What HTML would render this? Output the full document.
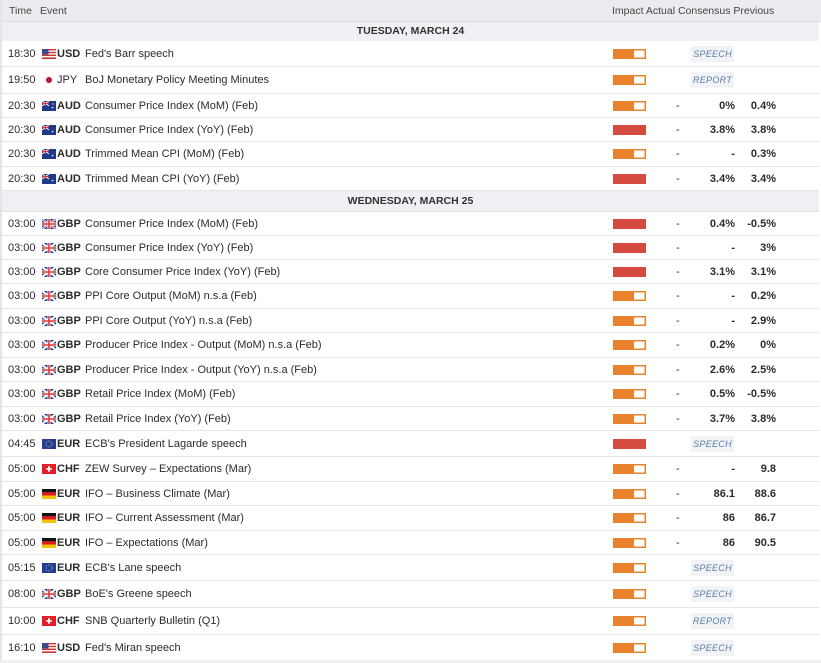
<!DOCTYPE html>
<html><head><meta charset="utf-8"><style>
body{margin:0;width:821px;height:663px;overflow:hidden;background:#fff;font-family:"Liberation Sans",sans-serif;font-size:11px;color:#2b2b2b;position:relative}
.r{position:absolute;left:2px;width:817px;border-bottom:1px solid #e4e5e9;background:#fff}
.r>*{position:absolute;top:50%;transform:translateY(-50%)}
.t{left:6px}
.f{left:40px;width:14px;height:10px}
.c{left:55px;font-weight:bold}
.e{left:83px}
.b{left:611px;width:33px;height:10px}
.b.o{background:linear-gradient(90deg,#e8822e 0 21px,#fff 21px);box-shadow:inset 0 0 0 1.5px #e8822e}
.b.h{background:#d64b3f}
.d{left:674px}
.cs{right:84px;text-align:right;font-weight:bold}
.pv{right:43px;text-align:right;font-weight:bold}
.sp{left:689px;width:43px;height:16px;background:#f1f3f6;color:#5b7fa6;font-style:italic;font-size:9px;line-height:16px;text-align:center;letter-spacing:.3px}
.day{position:absolute;left:2px;width:817px;background:#eef0f4;text-align:center;font-weight:bold;font-size:10.5px;color:#333;border-bottom:1px solid #e0e1e5}
.hd{position:absolute;left:0;top:0;width:821px;height:21px;background:#ebecf0;border-bottom:1px solid #dcdde2;font-size:10.5px;color:#444;line-height:22px}
</style></head><body>
<div class="hd"><span style="position:absolute;left:9px">Time</span><span style="position:absolute;left:40px">Event</span><span style="position:absolute;left:612px">Impact Actual Consensus Previous</span></div>
<div style="position:absolute;left:0;top:0;width:2px;height:663px;background:#e4e5e9"></div>
<div style="position:absolute;left:0;top:660px;width:821px;height:3px;background:#eef0f4"></div>
<div class="day" style="top:22px;height:19px;line-height:19px">TUESDAY, MARCH 24</div>

<div class="r" style="top:41px;height:25px"><span class="t">18:30</span><svg class="f" viewBox="0 0 14 10"><rect width="14" height="10" fill="#fff"/><g fill="#c33"><rect y="0" width="14" height="1.4"/><rect y="2.8" width="14" height="1.4"/><rect y="5.6" width="14" height="1.4"/><rect y="8.4" width="14" height="1.6"/></g><rect width="6.5" height="5.5" fill="#3b4a8c"/></svg><span class="c">USD</span><span class="e">Fed's Barr speech</span><span class="b o"></span><span class="sp">SPEECH</span></div>
<div class="r" style="top:67px;height:26px"><span class="t">19:50</span><svg class="f" viewBox="0 0 14 10"><rect width="14" height="10" fill="#fff"/><circle cx="7" cy="5" r="3" fill="#c2112c"/></svg><span class="c" style="font-weight:normal">JPY</span><span class="e">BoJ Monetary Policy Meeting Minutes</span><span class="b o"></span><span class="sp">REPORT</span></div>

<div class="r" style="top:94px;height:23px"><span class="t">20:30</span><svg class="f" viewBox="0 0 14 10"><rect width="14" height="10" fill="#1f3a8a"/><path d="M0 0L7 5M7 0L0 5" stroke="#fff" stroke-width="1"/><path d="M3.5 0V5M0 2.5H7" stroke="#d33" stroke-width="1"/><circle cx="10.5" cy="6.5" r=".8" fill="#fff"/><circle cx="11" cy="3" r=".6" fill="#fff"/></svg><span class="c">AUD</span><span class="e">Consumer Price Index (MoM) (Feb)</span><span class="b o"></span><span class="d">-</span><span class="cs">0%</span><span class="pv">0.4%</span></div>
<div class="r" style="top:118px;height:23px"><span class="t">20:30</span><svg class="f" viewBox="0 0 14 10"><rect width="14" height="10" fill="#1f3a8a"/><path d="M0 0L7 5M7 0L0 5" stroke="#fff" stroke-width="1"/><path d="M3.5 0V5M0 2.5H7" stroke="#d33" stroke-width="1"/><circle cx="10.5" cy="6.5" r=".8" fill="#fff"/></svg><span class="c">AUD</span><span class="e">Consumer Price Index (YoY) (Feb)</span><span class="b h"></span><span class="d">-</span><span class="cs">3.8%</span><span class="pv">3.8%</span></div>
<div class="r" style="top:142px;height:24px"><span class="t">20:30</span><svg class="f" viewBox="0 0 14 10"><rect width="14" height="10" fill="#1f3a8a"/><path d="M0 0L7 5M7 0L0 5" stroke="#fff" stroke-width="1"/><path d="M3.5 0V5M0 2.5H7" stroke="#d33" stroke-width="1"/><circle cx="10.5" cy="6.5" r=".8" fill="#fff"/></svg><span class="c">AUD</span><span class="e">Trimmed Mean CPI (MoM) (Feb)</span><span class="b o"></span><span class="d">-</span><span class="cs">-</span><span class="pv">0.3%</span></div>
<div class="r" style="top:167px;height:23px"><span class="t">20:30</span><svg class="f" viewBox="0 0 14 10"><rect width="14" height="10" fill="#1f3a8a"/><path d="M0 0L7 5M7 0L0 5" stroke="#fff" stroke-width="1"/><path d="M3.5 0V5M0 2.5H7" stroke="#d33" stroke-width="1"/><circle cx="10.5" cy="6.5" r=".8" fill="#fff"/></svg><span class="c">AUD</span><span class="e">Trimmed Mean CPI (YoY) (Feb)</span><span class="b h"></span><span class="d">-</span><span class="cs">3.4%</span><span class="pv">3.4%</span></div>

<div class="day" style="top:191px;height:20px;line-height:20px">WEDNESDAY, MARCH 25</div>

<div class="r" style="top:212px;height:23px"><span class="t">03:00</span><svg class="f" viewBox="0 0 14 10"><rect width="14" height="10" fill="#2a3d8f"/><path d="M0 0L14 10M14 0L0 10" stroke="#fff" stroke-width="2"/><path d="M0 0L14 10M14 0L0 10" stroke="#d33" stroke-width=".7"/><path d="M7 0V10M0 5H14" stroke="#fff" stroke-width="3"/><path d="M7 0V10M0 5H14" stroke="#d33" stroke-width="1.6"/></svg><span class="c">GBP</span><span class="e">Consumer Price Index (MoM) (Feb)</span><span class="b h"></span><span class="d">-</span><span class="cs">0.4%</span><span class="pv">-0.5%</span></div>
<div class="r" style="top:236px;height:23px"><span class="t">03:00</span><svg class="f" viewBox="0 0 14 10"><rect width="14" height="10" fill="#2a3d8f"/><path d="M0 0L14 10M14 0L0 10" stroke="#fff" stroke-width="2"/><path d="M7 0V10M0 5H14" stroke="#fff" stroke-width="3"/><path d="M7 0V10M0 5H14" stroke="#d33" stroke-width="1.6"/></svg><span class="c">GBP</span><span class="e">Consumer Price Index (YoY) (Feb)</span><span class="b h"></span><span class="d">-</span><span class="cs">-</span><span class="pv">3%</span></div>
<div class="r" style="top:260px;height:23px"><span class="t">03:00</span><svg class="f" viewBox="0 0 14 10"><rect width="14" height="10" fill="#2a3d8f"/><path d="M0 0L14 10M14 0L0 10" stroke="#fff" stroke-width="2"/><path d="M7 0V10M0 5H14" stroke="#fff" stroke-width="3"/><path d="M7 0V10M0 5H14" stroke="#d33" stroke-width="1.6"/></svg><span class="c">GBP</span><span class="e">Core Consumer Price Index (YoY) (Feb)</span><span class="b h"></span><span class="d">-</span><span class="cs">3.1%</span><span class="pv">3.1%</span></div>
<div class="r" style="top:284px;height:24px"><span class="t">03:00</span><svg class="f" viewBox="0 0 14 10"><rect width="14" height="10" fill="#2a3d8f"/><path d="M0 0L14 10M14 0L0 10" stroke="#fff" stroke-width="2"/><path d="M7 0V10M0 5H14" stroke="#fff" stroke-width="3"/><path d="M7 0V10M0 5H14" stroke="#d33" stroke-width="1.6"/></svg><span class="c">GBP</span><span class="e">PPI Core Output (MoM) n.s.a (Feb)</span><span class="b o"></span><span class="d">-</span><span class="cs">-</span><span class="pv">0.2%</span></div>
<div class="r" style="top:309px;height:23px"><span class="t">03:00</span><svg class="f" viewBox="0 0 14 10"><rect width="14" height="10" fill="#2a3d8f"/><path d="M0 0L14 10M14 0L0 10" stroke="#fff" stroke-width="2"/><path d="M7 0V10M0 5H14" stroke="#fff" stroke-width="3"/><path d="M7 0V10M0 5H14" stroke="#d33" stroke-width="1.6"/></svg><span class="c">GBP</span><span class="e">PPI Core Output (YoY) n.s.a (Feb)</span><span class="b o"></span><span class="d">-</span><span class="cs">-</span><span class="pv">2.9%</span></div>
<div class="r" style="top:333px;height:24px"><span class="t">03:00</span><svg class="f" viewBox="0 0 14 10"><rect width="14" height="10" fill="#2a3d8f"/><path d="M0 0L14 10M14 0L0 10" stroke="#fff" stroke-width="2"/><path d="M7 0V10M0 5H14" stroke="#fff" stroke-width="3"/><path d="M7 0V10M0 5H14" stroke="#d33" stroke-width="1.6"/></svg><span class="c">GBP</span><span class="e">Producer Price Index - Output (MoM) n.s.a (Feb)</span><span class="b o"></span><span class="d">-</span><span class="cs">0.2%</span><span class="pv">0%</span></div>
<div class="r" style="top:358px;height:23px"><span class="t">03:00</span><svg class="f" viewBox="0 0 14 10"><rect width="14" height="10" fill="#2a3d8f"/><path d="M0 0L14 10M14 0L0 10" stroke="#fff" stroke-width="2"/><path d="M7 0V10M0 5H14" stroke="#fff" stroke-width="3"/><path d="M7 0V10M0 5H14" stroke="#d33" stroke-width="1.6"/></svg><span class="c">GBP</span><span class="e">Producer Price Index - Output (YoY) n.s.a (Feb)</span><span class="b o"></span><span class="d">-</span><span class="cs">2.6%</span><span class="pv">2.5%</span></div>
<div class="r" style="top:382px;height:24px"><span class="t">03:00</span><svg class="f" viewBox="0 0 14 10"><rect width="14" height="10" fill="#2a3d8f"/><path d="M0 0L14 10M14 0L0 10" stroke="#fff" stroke-width="2"/><path d="M7 0V10M0 5H14" stroke="#fff" stroke-width="3"/><path d="M7 0V10M0 5H14" stroke="#d33" stroke-width="1.6"/></svg><span class="c">GBP</span><span class="e">Retail Price Index (MoM) (Feb)</span><span class="b o"></span><span class="d">-</span><span class="cs">0.5%</span><span class="pv">-0.5%</span></div>
<div class="r" style="top:407px;height:23px"><span class="t">03:00</span><svg class="f" viewBox="0 0 14 10"><rect width="14" height="10" fill="#2a3d8f"/><path d="M0 0L14 10M14 0L0 10" stroke="#fff" stroke-width="2"/><path d="M7 0V10M0 5H14" stroke="#fff" stroke-width="3"/><path d="M7 0V10M0 5H14" stroke="#d33" stroke-width="1.6"/></svg><span class="c">GBP</span><span class="e">Retail Price Index (YoY) (Feb)</span><span class="b o"></span><span class="d">-</span><span class="cs">3.7%</span><span class="pv">3.8%</span></div>
<div class="r" style="top:431px;height:25px"><span class="t">04:45</span><svg class="f" viewBox="0 0 14 10"><rect width="14" height="10" fill="#1f3d99"/><circle cx="7" cy="5" r="3" fill="none" stroke="#e8c930" stroke-width=".8" stroke-dasharray=".8 .8"/></svg><span class="c">EUR</span><span class="e">ECB's President Lagarde speech</span><span class="b h"></span><span class="sp">SPEECH</span></div>
<div class="r" style="top:457px;height:24px"><span class="t">05:00</span><svg class="f" viewBox="0 0 14 10"><rect width="14" height="10" fill="#e3202a"/><path d="M7 2.3V7.7M4.3 5H9.7" stroke="#fff" stroke-width="1.8"/></svg><span class="c">CHF</span><span class="e">ZEW Survey – Expectations (Mar)</span><span class="b o"></span><span class="d">-</span><span class="cs">-</span><span class="pv">9.8</span></div>
<div class="r" style="top:482px;height:23px"><span class="t">05:00</span><svg class="f" viewBox="0 0 14 10"><rect width="14" height="3.4" fill="#111"/><rect y="3.3" width="14" height="3.4" fill="#dd1c1c"/><rect y="6.6" width="14" height="3.4" fill="#f5c400"/></svg><span class="c">EUR</span><span class="e">IFO – Business Climate (Mar)</span><span class="b o"></span><span class="d">-</span><span class="cs">86.1</span><span class="pv">88.6</span></div>
<div class="r" style="top:506px;height:24px"><span class="t">05:00</span><svg class="f" viewBox="0 0 14 10"><rect width="14" height="3.4" fill="#111"/><rect y="3.3" width="14" height="3.4" fill="#dd1c1c"/><rect y="6.6" width="14" height="3.4" fill="#f5c400"/></svg><span class="c">EUR</span><span class="e">IFO – Current Assessment (Mar)</span><span class="b o"></span><span class="d">-</span><span class="cs">86</span><span class="pv">86.7</span></div>
<div class="r" style="top:531px;height:23px"><span class="t">05:00</span><svg class="f" viewBox="0 0 14 10"><rect width="14" height="3.4" fill="#111"/><rect y="3.3" width="14" height="3.4" fill="#dd1c1c"/><rect y="6.6" width="14" height="3.4" fill="#f5c400"/></svg><span class="c">EUR</span><span class="e">IFO – Expectations (Mar)</span><span class="b o"></span><span class="d">-</span><span class="cs">86</span><span class="pv">90.5</span></div>
<div class="r" style="top:555px;height:25px"><span class="t">05:15</span><svg class="f" viewBox="0 0 14 10"><rect width="14" height="10" fill="#1f3d99"/><circle cx="7" cy="5" r="3" fill="none" stroke="#e8c930" stroke-width=".8" stroke-dasharray=".8 .8"/></svg><span class="c">EUR</span><span class="e">ECB's Lane speech</span><span class="b o"></span><span class="sp">SPEECH</span></div>
<div class="r" style="top:581px;height:26px"><span class="t">08:00</span><svg class="f" viewBox="0 0 14 10"><rect width="14" height="10" fill="#2a3d8f"/><path d="M0 0L14 10M14 0L0 10" stroke="#fff" stroke-width="2"/><path d="M7 0V10M0 5H14" stroke="#fff" stroke-width="3"/><path d="M7 0V10M0 5H14" stroke="#d33" stroke-width="1.6"/></svg><span class="c">GBP</span><span class="e">BoE's Greene speech</span><span class="b o"></span><span class="sp">SPEECH</span></div>
<div class="r" style="top:608px;height:26px"><span class="t">10:00</span><svg class="f" viewBox="0 0 14 10"><rect width="14" height="10" fill="#e3202a"/><path d="M7 2.3V7.7M4.3 5H9.7" stroke="#fff" stroke-width="1.8"/></svg><span class="c">CHF</span><span class="e">SNB Quarterly Bulletin (Q1)</span><span class="b o"></span><span class="sp">REPORT</span></div>
<div class="r" style="top:635px;height:25px;border-bottom:none"><span class="t">16:10</span><svg class="f" viewBox="0 0 14 10"><rect width="14" height="10" fill="#fff"/><g fill="#c33"><rect y="0" width="14" height="1.4"/><rect y="2.8" width="14" height="1.4"/><rect y="5.6" width="14" height="1.4"/><rect y="8.4" width="14" height="1.6"/></g><rect width="6.5" height="5.5" fill="#3b4a8c"/></svg><span class="c">USD</span><span class="e">Fed's Miran speech</span><span class="b o"></span><span class="sp">SPEECH</span></div>
</body></html>
